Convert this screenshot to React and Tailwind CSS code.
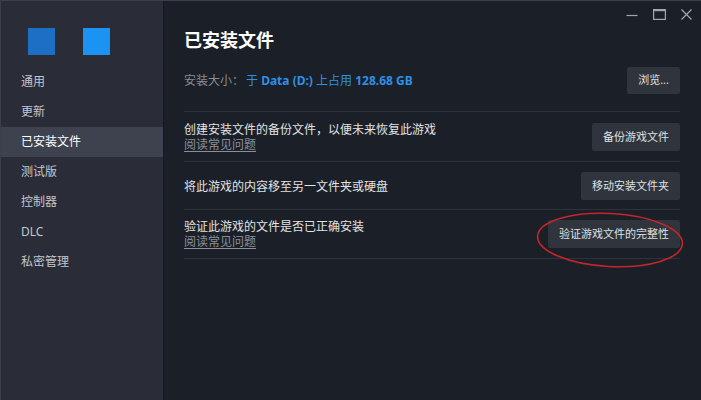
const navItems = ['通用', '更新', '已安装文件', '测试版', '控制器', 'DLC', '私密管理'];

function WindowControls() {
  return (
    <div className="flex h-[27px] items-center justify-end gap-[15px] pr-[9px] text-[#a3a7ad]">
      <svg width="12" height="12" viewBox="0 0 12 12">
        <path d="M0.5 6.5h11" stroke="currentColor" strokeWidth="1.2" />
      </svg>
      <svg width="13" height="11" viewBox="0 0 13 11">
        <rect x="0.6" y="0.6" width="11.8" height="9.8" fill="none" stroke="currentColor" strokeWidth="1.2" />
        <path d="M0.6 1.6h11.8" stroke="currentColor" strokeWidth="1.2" />
      </svg>
      <svg width="11" height="11" viewBox="0 0 11 11">
        <path d="M0.5 0.5l10 10M10.5 0.5l-10 10" stroke="currentColor" strokeWidth="1.2" />
      </svg>
    </div>
  );
}

function ActionButton({ children, tall = true }) {
  return (
    <button
      className={`${tall ? 'h-[28px]' : 'h-[27px]'} shrink-0 rounded-[2px] bg-[#2f343d] px-[11px] text-[11px] text-[#dfe1e3]`}
    >
      {children}
    </button>
  );
}

function FaqLink() {
  return <a className="block text-[12px] leading-[15px] text-[#8b9098] underline underline-offset-2">阅读常见问题</a>;
}

export default function App() {
  return (
    <div
      className="flex h-[400px] w-[701px] overflow-hidden border-l border-t border-[#3a3f4a] bg-[#1b1f27]"
      style={{ fontFamily: '"Noto Sans", "Noto Sans CJK SC", sans-serif' }}
    >
      <aside className="w-[162px] shrink-0 bg-[#2a2d38] pt-[27px]">
        <div className="mb-[12px] flex gap-[28px] pl-[27px]">
          <div className="h-[27px] w-[27px] bg-[#1d6fc6]" />
          <div className="h-[27px] w-[27px] bg-[#1b93f2]" />
        </div>
        <nav>
          {navItems.map(item => (
            <div
              key={item}
              className={`flex h-[30px] items-center pl-[20px] text-[12px] ${
                item === '已安装文件' ? 'bg-[#3d424e] text-white' : 'text-[#c3c6cb]'
              }`}
            >
              {item}
            </div>
          ))}
        </nav>
      </aside>

      <main className="flex-1 border-l border-[#161a20]">
        <WindowControls />
        <div className="pl-[20px] pr-[21px]">
          <h1 className="text-[18px] font-bold leading-[24px] text-white">已安装文件</h1>

          <div className="mb-[17px] mt-[15px] flex items-center justify-between">
            <p className="text-[12px] text-[#878d95]">
              安装大小：
              <span className="ml-[2px] text-[#2f8fe6]">
                于 <b>Data (D:)</b> 上占用 <b>128.68 GB</b>
              </span>
            </p>
            <ActionButton tall={false}>浏览...</ActionButton>
          </div>

          <div className="flex items-center justify-between border-t border-[#2d323b] pb-[9px] pt-[10px]">
            <div>
              <p className="text-[12px] leading-[15px] text-[#e1e3e5]">创建安装文件的备份文件，以便未来恢复此游戏</p>
              <FaqLink />
            </div>
            <ActionButton>备份游戏文件</ActionButton>
          </div>

          <div className="flex items-center justify-between border-t border-[#2d323b] pb-[9px] pt-[10px]">
            <p className="text-[12px] leading-[15px] text-[#e1e3e5]">将此游戏的内容移至另一文件夹或硬盘</p>
            <ActionButton>移动安装文件夹</ActionButton>
          </div>

          <div className="flex items-center justify-between border-b border-t border-[#2d323b] pb-[9px] pt-[9px]">
            <div>
              <p className="text-[12px] leading-[15px] text-[#e1e3e5]">验证此游戏的文件是否已正确安装</p>
              <FaqLink />
            </div>
            <div className="relative">
              <ActionButton>验证游戏文件的完整性</ActionButton>
              <svg
                className="pointer-events-none absolute left-[-12px] top-[-8px]"
                width="150"
                height="58"
                viewBox="0 0 150 58"
              >
                <ellipse
                  cx="74"
                  cy="28"
                  rx="72.5"
                  ry="26.5"
                  fill="none"
                  stroke="#c4262a"
                  strokeWidth="1.6"
                  transform="rotate(3 74 28)"
                />
              </svg>
            </div>
          </div>
        </div>
      </main>
    </div>
  );
}
